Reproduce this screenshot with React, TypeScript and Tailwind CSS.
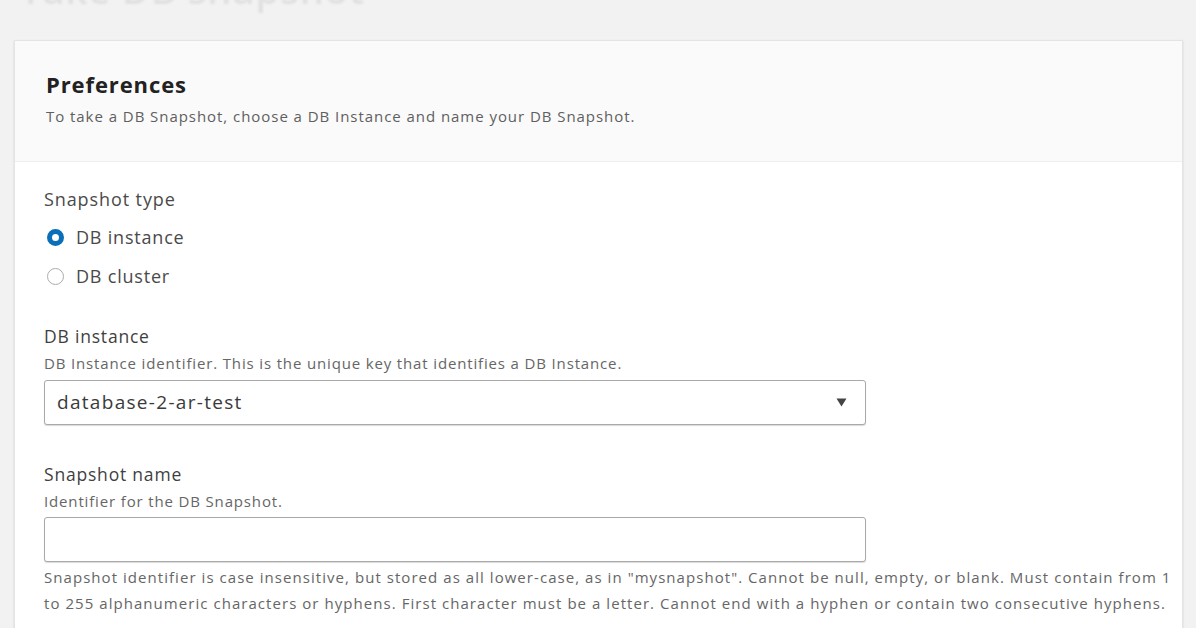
import type { JSX } from 'react';

// Take DB snapshot — Preferences panel

function Radio({ checked, label }: { checked: boolean; label: string }): JSX.Element {
  return (
    <label className="flex h-[39px] items-center">
      <span
        className={
          'ml-[3px] box-border inline-block h-[17px] w-[17px] rounded-full ' +
          (checked
            ? 'border-[5px] border-[#0a6fb8] bg-white'
            : 'border-[1.5px] border-[#a7adb1] bg-white')
        }
      />
      <span className="ml-[12px] text-[18px] tracking-[0.8px] text-[#4a4a4a]">{label}</span>
    </label>
  );
}

export default function App(): JSX.Element {
  return (
    <div
      className="min-h-screen overflow-hidden bg-[#f2f2f2] pb-10"
      style={{ fontFamily: '"Open Sans", "Noto Sans", sans-serif' }}
    >
      <h1 className="-mt-[33px] pl-[20px] text-[38px] font-semibold leading-[44px] tracking-[1px] text-[#e0e0e0] blur-[0.8px]">
        Take DB snapshot
      </h1>

      <div className="ml-[14px] mr-[13px] mt-[29px] border border-[#e4e4e4] bg-white shadow-[0_1px_2px_rgba(0,0,0,0.12)]">
        {/* Header */}
        <div className="border-b border-[#eeeeee] bg-[#fafafa] px-[31px] pb-[36px] pt-[30px]">
          <h2 className="text-[22px] font-bold leading-[26px] tracking-[0.9px] text-[#222]">
            Preferences
          </h2>
          <p className="mt-[10px] text-[15px] leading-[18px] tracking-[0.95px] text-[#5f5f5f]">
            To take a DB Snapshot, choose a DB Instance and name your DB Snapshot.
          </p>
        </div>

        {/* Body */}
        <div className="pb-[30px] pl-[29px] pr-[6px] pt-[27px]">
          <div className="text-[18px] leading-[20px] tracking-[0.9px] text-[#4a4a4a]">Snapshot type</div>
          <div className="mt-[9px]">
            <Radio checked label="DB instance" />
            <Radio checked={false} label="DB cluster" />
          </div>

          <div className="mt-[30px] text-[17.5px] leading-[20px] tracking-[0.8px] text-[#3f3f3f]">
            DB instance
          </div>
          <div className="mt-[8px] text-[15px] leading-[18px] tracking-[0.85px] text-[#666]">
            DB Instance identifier. This is the unique key that identifies a DB Instance.
          </div>
          <div className="mt-[8px] flex h-[45px] w-[822px] items-center justify-between rounded-[3px] border border-[#a9a9a9] bg-white px-[12px] shadow-[0_1px_1px_rgba(0,0,0,0.15)]">
            <span className="text-[19px] tracking-[1.3px] text-[#3a3a3a]">database-2-ar-test</span>
            <svg width="11" height="9" viewBox="0 0 11 9" className="mr-[6px]">
              <path d="M0.5 0.5h10L5.5 8.5z" fill="#444" />
            </svg>
          </div>

          <div className="mt-[39px] text-[17.5px] leading-[20px] tracking-[0.8px] text-[#3f3f3f]">
            Snapshot name
          </div>
          <div className="mt-[8px] text-[15px] leading-[18px] tracking-[0.85px] text-[#666]">
            Identifier for the DB Snapshot.
          </div>
          <input
            type="text"
            className="mt-[7px] block h-[45px] w-[822px] rounded-[3px] border border-[#a9a9a9] bg-white px-[12px] shadow-[0_1px_1px_rgba(0,0,0,0.15)] outline-none"
          />
          <p className="mt-[2px] text-[15px] leading-[26px] tracking-[1.05px] text-[#666]">
            Snapshot identifier is case insensitive, but stored as all lower-case, as in "mysnapshot". Cannot be null, empty, or blank. Must contain from 1 to 255 alphanumeric characters or hyphens. First character must be a letter. Cannot end with a hyphen or contain two consecutive hyphens.
          </p>
        </div>
      </div>
    </div>
  );
}
